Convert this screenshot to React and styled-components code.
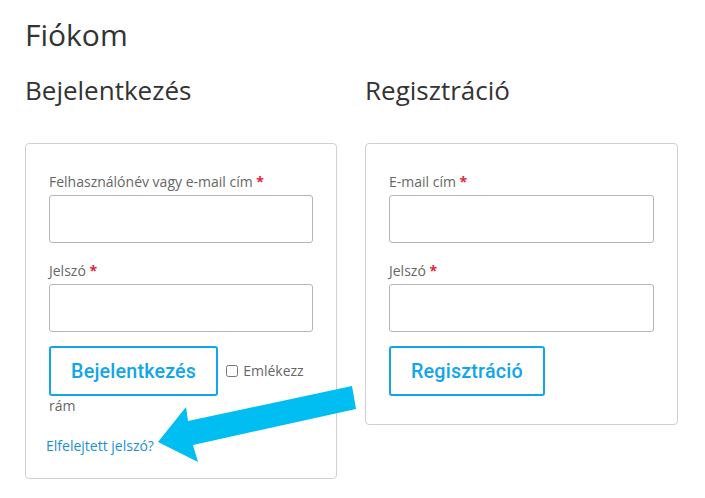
import React from "react";
import styled, { createGlobalStyle } from "styled-components";

const GlobalStyle = createGlobalStyle`
  body {
    margin: 0;
    background: #fff;
    font-family: "Open Sans", "Liberation Sans", sans-serif;
    color: #333;
  }
`;

const Page = styled.div`
  position: relative;
  padding: 14px 25px 0 25px;
`;

const Title = styled.h1`
  margin: 0 0 17px 0;
  font-size: 30px;
  line-height: 42px;
  font-weight: 400;
  color: #333;
`;

const Columns = styled.div`
  display: grid;
  grid-template-columns: 312px 313px;
  column-gap: 28px;
  align-items: start;
`;

const Heading = styled.h2`
  margin: 0 0 36px 0;
  font-size: 26px;
  line-height: 34px;
  font-weight: 400;
  color: #333;
`;

const Card = styled.form`
  border: 1px solid #d0d0d0;
  border-radius: 4px;
  padding: 28px 23px 28px 23px;
`;

const Field = styled.div`
  margin-bottom: 18px;
`;

const Label = styled.label`
  display: block;
  font-size: 14px;
  line-height: 20px;
  color: #666;
  margin-bottom: 3px;
`;

const Required = styled.span`
  color: #e8213e;
  font-weight: 700;
`;

const Input = styled.input`
  display: block;
  box-sizing: border-box;
  width: 100%;
  height: 48px;
  border: 1px solid #b5b5b5;
  border-radius: 3px;
  background: #fff;
`;

const Actions = styled.div`
  display: flex;
  flex-wrap: wrap;
  align-items: center;
  margin-top: -4px;
`;

const Button = styled.button`
  box-sizing: border-box;
  height: 50px;
  padding: 0 ${(p) => p.$pad}px;
  border: 2px solid #12a5ea;
  border-radius: 3px;
  background: #fff;
  color: #12a5ea;
  font-family: Roboto, "Liberation Sans", sans-serif;
  font-size: 19.7px;
  font-weight: 500;
  letter-spacing: 0.2px;
`;

const Remember = styled.label`
  margin-left: 8px;
  width: 86px;
  font-size: 14px;
  line-height: 20px;
  color: #666;
`;

const Check = styled.input`
  width: 12px;
  height: 12px;
  margin: 0 5px 0 0;
  vertical-align: -1px;
`;

const Rest = styled.div`
  width: 100%;
  font-size: 14px;
  line-height: 20px;
  color: #666;
  margin-top: 0;
`;

const Lost = styled.a`
  display: block;
  margin: 21px 0 -5px -3px;
  font-size: 14px;
  line-height: 18px;
  color: #1a8fd6;
  text-decoration: none;
`;

const Arrow = styled.svg`
  position: absolute;
  left: 0;
  top: 0;
  pointer-events: none;
`;

export default function App() {
  return (
    <Page>
      <GlobalStyle />
      <Title>Fiókom</Title>
      <Columns>
        <div>
          <Heading>Bejelentkezés</Heading>
          <Card>
            <Field>
              <Label>
                Felhasználónév vagy e-mail cím <Required>*</Required>
              </Label>
              <Input type="text" />
            </Field>
            <Field>
              <Label>
                Jelszó <Required>*</Required>
              </Label>
              <Input type="password" />
            </Field>
            <Actions>
              <Button type="button" $pad={20}>Bejelentkezés</Button>
              <Remember>
                <Check type="checkbox" />
                Emlékezz
              </Remember>
              <Rest>rám</Rest>
            </Actions>
            <Lost href="#">Elfelejtett jelszó?</Lost>
          </Card>
        </div>
        <div>
          <Heading>Regisztráció</Heading>
          <Card>
            <Field>
              <Label>
                E-mail cím <Required>*</Required>
              </Label>
              <Input type="email" />
            </Field>
            <Field>
              <Label>
                Jelszó <Required>*</Required>
              </Label>
              <Input type="password" />
            </Field>
            <Actions>
              <Button type="button" $pad={20}>Regisztráció</Button>
            </Actions>
          </Card>
        </div>
      </Columns>
      <Arrow width="705" height="498" viewBox="0 0 705 498">
        <polygon
          points="352,386 188,421 186,407 158,442 198,462 193,445 356,409"
          fill="#00bdf2"
        />
      </Arrow>
    </Page>
  );
}
